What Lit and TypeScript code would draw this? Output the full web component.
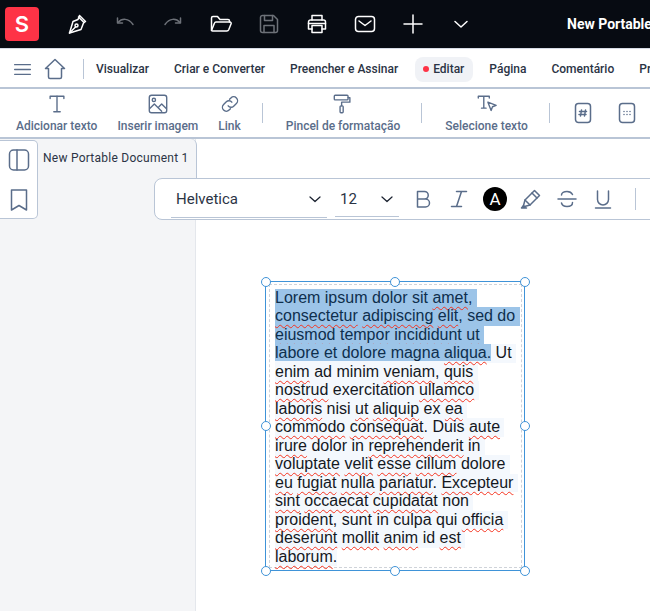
import { LitElement, html, css, svg } from 'lit';
import { customElement } from 'lit/decorators.js';

// {word} marks a word the spell checker underlines
const SELECTED = [
    'Lorem ipsum dolor sit {amet}, ',
    '{consectetur} {adipiscing} {elit}, sed do ',
    '{eiusmod} {tempor} {incididunt} {ut} ',
];
const LAST_SELECTED = 'labore et dolore magna {aliqua}.';
const PLAIN = [
    '{enim} ad minim {veniam}, {quis} ',
    '{nostrud} exercitation {ullamco} ',
    '{laboris} nisi {ut} {aliquip} ex {ea} ',
    '{commodo} {consequat}. Duis {aute} ',
    '{irure} dolor in {reprehenderit} in ',
    '{voluptate} {velit} {esse} {cillum} dolore ',
    '{eu} {fugiat} {nulla} {pariatur}. {Excepteur} ',
    '{sint} {occaecat} {cupidatat} non ',
    '{proident}, sunt in culpa qui {officia} ',
    '{deserunt} {mollit} {anim} id {est} ',
    '{laborum}.',
];

const words = (line: string) =>
    line.split(/(\{[^}]+\})/).filter(Boolean).map((part) =>
        part.startsWith('{') ? html`<span class="err">${part.slice(1, -1)}</span>` : part
    );

const icon = (body: unknown, size = 24) => html`
    <svg width=${size} height=${size} viewBox="0 0 24 24" fill="none" stroke="currentColor"
        stroke-width="1.5" stroke-linecap="round" stroke-linejoin="round">${body}</svg>
`;

const icons = {
    pen: svg`<path d="M14.5 3.5l6 6-2 1.5-2.5 6.5L4.5 21l3.5-11.5L13 7.5z"/><path d="M4.5 21l6-6"/><circle cx="11.5" cy="13.5" r="1.5"/><path d="M13.5 5l5.5 5.5"/>`,
    undo: svg`<path d="M5 10.500c4-4.500 10.500-4.500 15 2"/><path d="M4.500 6v5h5"/>`,
    redo: svg`<path d="M19 10.500c-4-4.500-10.500-4.500-15 2"/><path d="M19.500 6v5h-5"/>`,
    folder: svg`<path d="M2.500 18V6a1.500 1.500 0 0 1 1.500-1.500h4.500l2.500 3h8a1.500 1.500 0 0 1 1.500 1.500v1"/><path d="M2.500 18.500l3-7.500a1.500 1.500 0 0 1 1.400-1h14a1.300 1.300 0 0 1 1.200 1.800l-2.400 6a2 2 0 0 1-1.800 1.200H4a1.500 1.500 0 0 1-1.500-.5z"/>`,
    save: svg`<path d="M3.500 5.500a2 2 0 0 1 2-2h11l4 4v11a2 2 0 0 1-2 2h-13a2 2 0 0 1-2-2z"/><path d="M7.500 3.500v5h8v-5"/><path d="M7 20.500v-7h10v7"/>`,
    print: svg`<path d="M7 8V3.500h10V8"/><path d="M7 17H3.500V10a2 2 0 0 1 2-2h13a2 2 0 0 1 2 2v7H17"/><path d="M7 13.500h10v7H7z"/><path d="M3.500 11.500h17"/>`,
    mail: svg`<rect x="2.500" y="4.500" width="19" height="15" rx="3"/><path d="M6 9l6 4.500L18 9"/>`,
    plus: svg`<path d="M12 3v18M3 12h18"/>`,
    chevron: svg`<path d="M6 9.500l6 5.500 6-5.500"/>`,
    menu: svg`<path d="M3 6.500h18M3 12h18M3 17.500h18"/>`,
    home: svg`<path d="M12 2.500L2.500 11.500h3v8.500a1.500 1.500 0 0 0 1.500 1.500h10a1.500 1.500 0 0 0 1.500-1.500v-8.500h3z"/>`,
    text: svg`<path d="M4.500 6V3.500h15V6"/><path d="M12 3.500v17M8.500 20.500h7"/>`,
    image: svg`<rect x="2.500" y="2.500" width="19" height="19" rx="2.500"/><circle cx="7.500" cy="7.500" r="1.800"/><path d="M3 17l5-5 8 8M13 15l3-3 5 5"/>`,
    link: svg`<path d="M10 14a4 4 0 0 0 6 .4l3-3a4.200 4.200 0 0 0-6-6l-1.500 1.500"/><path d="M14 10a4 4 0 0 0-6-.4l-3 3a4.200 4.200 0 0 0 6 6l1.500-1.500"/>`,
    roller: svg`<rect x="2.500" y="2.500" width="15" height="5" rx="1"/><path d="M17.500 5h2v5h-9v4"/><rect x="8.800" y="14" width="3.400" height="7.500" rx="1"/>`,
    select: svg`<path d="M2.500 5.500v-2h12v2M8.500 3.500v13M6 16.500h5"/><path d="M13 10l9 3.500-4 1.500-1.500 4z"/>`,
    hash: svg`<rect x="4.500" y="2.500" width="15" height="19" rx="3"/><path d="M10.500 9l-1 6M14.500 9l-1 6M8.500 10.500h7M8 13.500h7"/>`,
    grid: svg`<rect x="4.500" y="2.500" width="15" height="19" rx="3"/><path d="M9 10.500h.01M12 10.500h.01M15 10.500h.01M9 13.500h.01M12 13.500h.01M15 13.500h.01"/>`,
    panel: svg`<rect x="2.500" y="2" width="19" height="20" rx="4"/><path d="M10 2v20"/>`,
    bookmark: svg`<path d="M4.500 2h15v20l-7.500-4.500L4.500 22z"/>`,
    bold: svg`<path d="M6.500 4.500h7a3.700 3.700 0 0 1 0 7.500h-7zM6.500 12h8a4 4 0 0 1 0 8h-8z"/>`,
    italic: svg`<path d="M9.500 4.500h10M4.500 19.500h10M14.500 4.500l-5 15"/>`,
    marker: svg`<path d="M15.500 3.500l5 5-9.500 9.500-5-5z"/><path d="M6 13l-1.500 5.500 1 1 5.500-1.500"/><path d="M4.500 18.500L2.500 21h5" fill="currentColor"/><path d="M13 6l5 5"/>`,
    strike: svg`<path d="M17.500 7.500C16.500 5.500 14.500 4.500 12 4.500c-3 0-5.500 1.500-5.500 3.500M6.500 16c.5 2 3 3.500 5.500 3.500 3 0 5.500-1.500 5.500-4M3 12h18"/>`,
    underline: svg`<path d="M6.500 4v8.500a5.500 5.500 0 0 0 11 0V4M4.500 21h15"/>`,
};

@customElement('app-root')
export class AppRoot extends LitElement {
    static styles = css`
        :host {
            display: block;
            width: 650px;
            height: 611px;
            overflow: hidden;
            position: relative;
            background: #fff;
            font-family: Roboto, "Liberation Sans", sans-serif;
            --line: #b9c5d6;
            --slate: #5a6d8a;
        }
        svg { display: block; flex: none; }

        .top {
            height: 48px;
            border-bottom: 1px solid #d5dbe5;
            background: #070b12;
            display: flex;
            align-items: center;
            padding-left: 5px;
            color: #fff;
            white-space: nowrap;
        }
        .logo {
            width: 34px;
            height: 34px;
            background: #fe3346;
            border-radius: 4px;
            display: flex;
            align-items: center;
            justify-content: center;
            font: 600 22px Inter, Roboto, sans-serif;
            margin-right: 26px;
            flex: none;
        }
        .tools { display: flex; gap: 24px; }
        .muted { color: #6d7178; }
        .title { margin-left: 94px; font-size: 14px; font-weight: 700; }

        .menu {
            height: 36px;
            padding: 2px 0 0 12px;
            border-bottom: 2px solid var(--line);
            display: flex;
            align-items: center;
            font-size: 12px;
            font-weight: 500;
            color: #2b3445;
            white-space: nowrap;
        }
        .menu .ham { color: var(--slate); margin-right: 10px; }
        .menu .home { color: var(--slate); }
        .menu .divider { margin: 0 12px 0 16px; }
        .menu .items { display: flex; align-items: center; gap: 25px; }
        .pill {
            background: #f0f2f6;
            border-radius: 8px;
            height: 25px;
            padding: 0 9px 0 8px;
            margin: 0 -9px 0 -8px;
            display: flex;
            align-items: center;
            gap: 4px;
        }
        .dot { width: 6px; height: 6px; border-radius: 50%; background: #fe3346; }
        .divider { width: 1px; height: 20px; background: var(--line); flex: none; }

        .bar {
            height: 48px;
            border-bottom: 2px solid var(--line);
            display: flex;
            align-items: center;
            gap: 20px;
            padding-left: 16px;
            font-size: 12px;
            font-weight: 500;
            color: var(--slate);
            white-space: nowrap;
        }
        .bar .divider { margin: 0 3px 0 1px; }
        .action { display: flex; flex-direction: column; align-items: center; gap: 3px; }
        .action svg { margin-bottom: 1px; }
        .bar .square { margin-left: -2px; width: 24px; }
        .bar .square + .square { margin-left: 0; }

        .main { display: flex; height: 472px; }
        .side {
            width: 195px;
            flex: none;
            background: #f4f5f7;
            border-right: 1px solid #e4e7ec;
        }
        .panel {
            width: 38px;
            height: 79px;
            margin-top: 1px;
            box-sizing: border-box;
            background: #fff;
            border: 1px solid var(--line);
            border-left: 0;
            border-radius: 0 5px 5px 0;
            display: flex;
            flex-direction: column;
            align-items: center;
            gap: 16px;
            padding-top: 7px;
            color: var(--slate);
        }
        .tab {
            position: absolute;
            left: 39px;
            top: 139px;
            width: 158px;
            height: 39px;
            box-sizing: border-box;
            background: #f4f5f7;
            border-right: 1px solid var(--line);
            border-radius: 0 6px 0 0;
            padding: 12px 0 0 4px;
            font-size: 12px;
            color: #2b3445;
            letter-spacing: 0.25px;
        }
        .format {
            position: absolute;
            left: 154px;
            top: 178px;
            right: -2px;
            height: 42px;
            box-sizing: border-box;
            background: #fff;
            border: 1px solid var(--line);
            border-radius: 8px 0 0 8px;
            display: flex;
            align-items: center;
            color: var(--slate);
        }
        .select {
            height: 36px;
            margin-top: 1px;
            box-sizing: border-box;
            border-bottom: 1px solid var(--line);
            display: flex;
            align-items: center;
            justify-content: space-between;
            color: #2b3445;
            font-size: 15px;
        }
        .select svg { color: #1b2230; }
        .font { width: 156px; margin-left: 16px; padding: 0 2px 0 5px; }
        .size { width: 64px; margin: 0 12px 0 8px; padding: 0 2px 0 5px; }
        .fmt { display: flex; align-items: center; gap: 12px; }
        .ink {
            width: 24px;
            height: 24px;
            border-radius: 50%;
            background: #000;
            color: #fff;
            font-size: 17px;
            display: flex;
            align-items: center;
            justify-content: center;
        }
        .format .divider { margin-left: 20px; height: 22px; }

        .page { flex: 1; padding: 142px 0 0 69px; }
        .box {
            position: relative;
            width: 260px;
            height: 290px;
            box-sizing: border-box;
            border: 1px solid #3f93d8;
        }
        .dash {
            position: absolute;
            inset: 2px 2px 2px 3px;
            border: 1px dashed #cfd3d9;
        }
        .handles { position: absolute; inset: -0.5px; }
        .handle {
            position: absolute;
            width: 8px;
            height: 8px;
            border: 1px solid #3f93d8;
            border-radius: 50%;
            background: #fff;
            transform: translate(-50%, -50%);
        }
        .copy {
            position: absolute;
            left: 9px;
            top: 6.5px;
            font: 16px/18.5px "Liberation Sans", Arial, sans-serif;
            color: #14181f;
        }
        .ln { display: block; width: fit-content; background: #f4f8fd; white-space: pre; }
        .sel { background: #9cc4e8; color: #0e2f4d; }
        .err {
            text-decoration: underline wavy #f5331f 1px;
            text-underline-offset: 3px;
            text-decoration-skip-ink: none;
        }
    `;

    render() {
        const handles = [
            [0, 0], [50, 0], [100, 0],
            [0, 50], [100, 50],
            [0, 100], [50, 100], [100, 100],
        ];
        return html`
            <div class="top">
                <div class="logo">S</div>
                <div class="tools">
                    ${icon(icons.pen)}
                    <span class="muted">${icon(icons.undo)}</span>
                    <span class="muted">${icon(icons.redo)}</span>
                    ${icon(icons.folder)}
                    <span class="muted">${icon(icons.save)}</span>
                    ${icon(icons.print)}
                    ${icon(icons.mail)}
                    ${icon(icons.plus)}
                    ${icon(icons.chevron)}
                </div>
                <div class="title">New Portable Document 1</div>
            </div>
            <div class="menu">
                <span class="ham">${icon(icons.menu, 21)}</span>
                <span class="home">${icon(icons.home)}</span>
                <span class="divider"></span>
                <div class="items">
                    <span>Visualizar</span>
                    <span>Criar e Converter</span>
                    <span>Preencher e Assinar</span>
                    <span class="pill"><span class="dot"></span>Editar</span>
                    <span>Página</span>
                    <span>Comentário</span>
                    <span>Proteger</span>
                </div>
            </div>
            <div class="bar">
                <div class="action">${icon(icons.text, 22)}Adicionar texto</div>
                <div class="action">${icon(icons.image, 22)}Inserir imagem</div>
                <div class="action">${icon(icons.link, 22)}Link</div>
                <span class="divider"></span>
                <div class="action">${icon(icons.roller, 22)}Pincel de formatação</div>
                <span class="divider"></span>
                <div class="action">${icon(icons.select, 22)}Selecione texto</div>
                <span class="divider"></span>
                <div class="square">${icon(icons.hash)}</div>
                <div class="square">${icon(icons.grid)}</div>
            </div>
            <div class="main">
                <div class="side">
                    <div class="panel">
                        ${icon(icons.panel)}
                        ${icon(icons.bookmark)}
                    </div>
                </div>
                <div class="page">
                    <div class="box">
                        <div class="dash"></div>
                        <div class="copy">
                            ${SELECTED.map((l) => html`<span class="ln sel">${words(l)}</span>`)}
                            <span class="ln"><span class="sel">${words(LAST_SELECTED)}</span> Ut </span>
                            ${PLAIN.map((l) => html`<span class="ln">${words(l)}</span>`)}
                        </div>
                        <div class="handles">
                            ${handles.map(
                                ([x, y]) => html`<span class="handle" style="left:${x}%;top:${y}%"></span>`
                            )}
                        </div>
                    </div>
                </div>
            </div>
            <div class="tab">New Portable Document 1</div>
            <div class="format">
                <div class="select font">Helvetica ${icon(icons.chevron, 20)}</div>
                <div class="select size">12 ${icon(icons.chevron, 20)}</div>
                <div class="fmt">
                    ${icon(icons.bold)}
                    ${icon(icons.italic)}
                    <span class="ink">A</span>
                    ${icon(icons.marker)}
                    ${icon(icons.strike)}
                    ${icon(icons.underline)}
                </div>
                <span class="divider"></span>
            </div>
        `;
    }
}
